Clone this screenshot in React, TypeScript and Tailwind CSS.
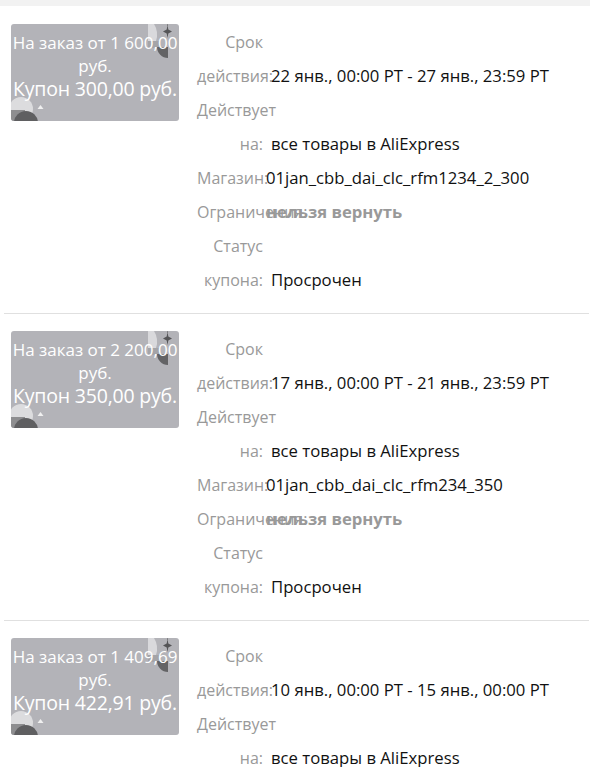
import type { ReactNode } from "react";

type Coupon = {
  id: number;
  minOrder: string;
  amount: string;
  period: string;
  store: string;
  status: string;
};

const COUPONS: Coupon[] = [
  { id: 1, minOrder: "1 600,00", amount: "300,00", period: "22 янв., 00:00 PT - 27 янв., 23:59 PT", store: "01jan_cbb_dai_clc_rfm1234_2_300", status: "Просрочен" },
  { id: 2, minOrder: "2 200,00", amount: "350,00", period: "17 янв., 00:00 PT - 21 янв., 23:59 PT", store: "01jan_cbb_dai_clc_rfm234_350", status: "Просрочен" },
  { id: 3, minOrder: "1 409,69", amount: "422,91", period: "10 янв., 00:00 PT - 15 янв., 00:00 PT", store: "01jan_cbb_dai_clc_rfm1234_422", status: "Просрочен" },
];

// decorative corners of the coupon ticket
function TicketDecor() {
  return (
    <svg className="pointer-events-none absolute inset-0" width="168" height="97" viewBox="0 0 168 97">
      <path d="M137 0 H143 Q148 8 145 17 L137 17 Z" fill="#d9d9dc" />
      <path d="M137 17 H149 V24 H137 Z" fill="#a4a4a8" />
      <path d="M157 23 L146 23 A11 11 0 0 0 157 34 Z" fill="#636365" />
      <path d="M156.5 0 V2" stroke="#77777a" strokeWidth="0.8" />
      <path d="M156.5 1 L157.3 5.5 L161 7.5 L157.3 9.5 L156.5 14 L155.7 9.5 L152 7.5 L155.7 5.5 Z" fill="#555557" />
      <circle cx="10" cy="85" r="12" fill="#dcdcde" />
      <path d="M0 86 H14 V97 H0 Z" fill="#8e8e90" />
      <circle cx="15" cy="99" r="12" fill="#5f5f61" />
      <path d="M29.5 81 L32.5 85 L26.5 85 Z" fill="#f0f0f0" />
    </svg>
  );
}

function Row({ label, children, tight }: { label: string; children: ReactNode; tight?: boolean }) {
  return (
    <div className="flex items-end leading-[34px]">
      <div className="w-[66px] shrink-0 text-right text-[16px] text-[#999]">{label}</div>
      <div className={`${tight ? "ml-[3px]" : "ml-2"} whitespace-nowrap text-[16.7px]`}>{children}</div>
    </div>
  );
}

function CouponItem({ c }: { c: Coupon }) {
  return (
    <div className="ml-1 mr-px flex items-start border-b border-[#e0e0e0] pt-[17px] pb-4">
      <div className="relative ml-[7px] h-[97px] w-[168px] shrink-0 overflow-hidden rounded-[3px] bg-[#b3b3b8] pt-[7px] text-center text-white">
        <TicketDecor />
        <div className="relative whitespace-nowrap text-[17px] leading-[23px]">
          На заказ от {c.minOrder}
          <br />
          руб.
        </div>
        <div className="relative whitespace-nowrap text-[19.5px] leading-[23px] tracking-[-0.2px]">Купон {c.amount} руб.</div>
      </div>
      <div className="mt-px ml-[18px] text-[#111]">
        <Row label="Срок действия:">{c.period}</Row>
        <Row label="Действует на:">все товары в AliExpress</Row>
        <Row label="Магазин:" tight>{c.store}</Row>
        <Row label="Ограничения:" tight>
          <span className="font-bold text-[#999]">нельзя вернуть</span>
        </Row>
        <Row label="Статус купона:">{c.status}</Row>
      </div>
    </div>
  );
}

export default function App() {
  return (
    <div className="min-h-screen bg-white font-['Open_Sans','Noto_Sans',sans-serif]">
      <div className="h-[6px] bg-[#f2f2f2]" />
      <div className="pt-px">
        {COUPONS.map(c => <CouponItem key={c.id} c={c} />)}
      </div>
    </div>
  );
}
